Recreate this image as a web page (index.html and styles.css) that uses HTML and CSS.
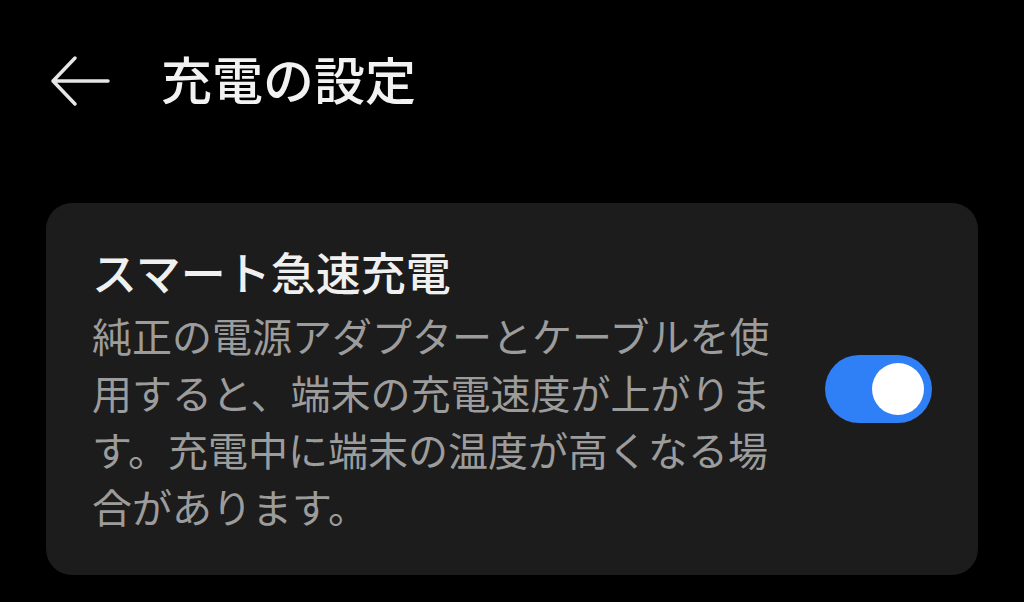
FILE: index.html
```html
<!DOCTYPE html>
<html lang="ja">
<head>
<meta charset="utf-8">
<link rel="stylesheet" href="styles.css">
</head>
<body>
<header class="topbar">
  <svg class="back" width="60" height="52" viewBox="0 0 60 52">
    <path d="M3 26 H58 M25 3 L3 26 L25 49" fill="none" stroke="#e6e6e6" stroke-width="3.5" stroke-linecap="round" stroke-linejoin="round"/>
  </svg>
  <h1 class="page-title">充電の設定</h1>
</header>
<section class="card">
  <div class="text">
    <div class="item-title">スマート急速充電</div>
    <div class="item-desc">純正の電源アダプターとケーブルを使用すると、端末の充電速度が上がります。充電中に端末の温度が高くなる場合があります。</div>
  </div>
  <div class="toggle"><div class="knob"></div></div>
</section>
</body>
</html>
```
FILE: styles.css
```css
html, body {
  margin: 0;
  padding: 0;
  background: #000;
  width: 1024px;
  height: 602px;
  overflow: hidden;
  font-family: "Noto Sans CJK JP", "Noto Sans", sans-serif;
}
.topbar {
  height: 162px;
  display: flex;
  align-items: center;
  padding-left: 50px;
  box-sizing: border-box;
}
.back {
  display: block;
  flex: none;
}
.page-title {
  margin: 0 0 0 51px;
  padding-bottom: 5px;
  font-size: 51px;
  font-weight: 500;
  color: #f2f2f2;
  line-height: 1;
}
.card {
  margin: 41px 46px 0 46px;
  height: 372px;
  background: #1c1c1c;
  border-radius: 26px;
  display: flex;
  align-items: center;
  justify-content: space-between;
  padding: 0 46px 0 46px;
  box-sizing: border-box;
}
.text {
  width: 690px;
}
.item-title {
  font-size: 45px;
  font-weight: 500;
  color: #f0f0f0;
  line-height: 58px;
  margin-bottom: 6px;
}
.item-desc {
  font-size: 40px;
  color: #9c9c9c;
  line-height: 57px;
  line-break: strict;
}
.toggle {
  width: 107px;
  height: 68px;
  border-radius: 34px;
  background: #2f7ff7;
  display: flex;
  align-items: center;
  justify-content: flex-end;
  padding-right: 8px;
  box-sizing: border-box;
  flex: none;
}
.knob {
  width: 52px;
  height: 52px;
  border-radius: 50%;
  background: #fff;
}
```
